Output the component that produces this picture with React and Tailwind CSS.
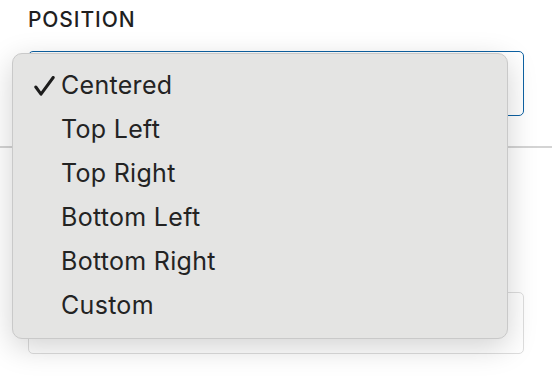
import React from "react";

const options = ["Centered", "Top Left", "Top Right", "Bottom Left", "Bottom Right", "Custom"];

const App = () => {
  const selected = "Centered";
  return (
    // main div
    <div className="relative w-[552px] h-[378px] overflow-hidden bg-white font-['Inter',sans-serif] text-[#222]">
      {/* label */}
      <p className="pl-[28px] pt-[8px] text-[21px] leading-[24px] font-medium tracking-[0.9px] text-[#1f1f1f]">
        POSITION
      </p>

      {/* select box (focused) */}
      <div className="mx-[28px] mt-[19px] h-[65px] rounded-[5px] border-[1.5px] border-[#0e62a3] bg-white"></div>

      {/* divider */}
      <div className="mt-[30px] h-[1.5px] w-full bg-[#d4d4d4]"></div>

      {/* next field */}
      <div className="mx-[28px] mt-[144px] h-[62px] rounded-[5px] border-[1.5px] border-[#dedede] bg-white"></div>

      {/* dropdown menu */}
      <div className="absolute left-[12px] top-[53px] w-[496px] rounded-[10px] border border-[#c9c9c9] bg-[#e4e4e3] py-[10px] shadow-[0_8px_30px_rgba(0,0,0,0.18)]">
        {options.map((opt) => (
          <div key={opt} className="relative flex h-[44px] items-center pl-[48px] text-[25px] tracking-[0.3px] text-[#232323]">
            {opt === selected && (
              <svg className="absolute left-[21px] top-[12px]" width="21" height="20" viewBox="0 0 21 20" fill="none">
                <path d="M1.8 11 L7 18.2 L19.2 1.5" stroke="#1c1c1c" strokeWidth="3" strokeLinecap="round" strokeLinejoin="round" />
              </svg>
            )}
            {opt}
          </div>
        ))}
      </div>
    </div>
  );
};

export default App;
